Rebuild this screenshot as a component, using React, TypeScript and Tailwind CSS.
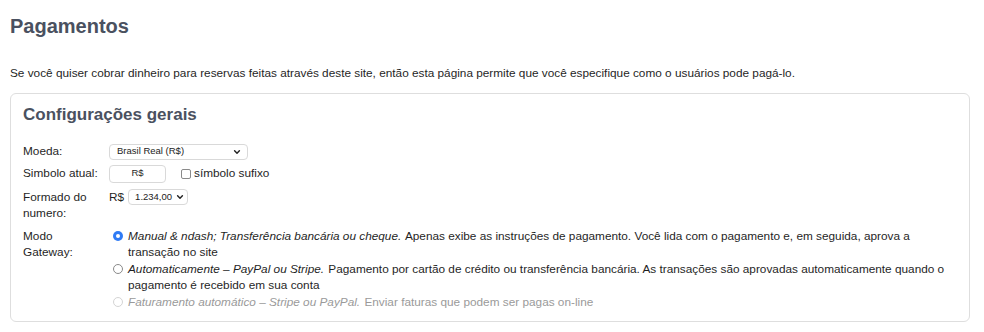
import { ReactNode } from 'react';

function Chevron() {
  return (
    <svg className="block w-[8px] h-[8px] shrink-0" viewBox="0 0 10 10" fill="none">
      <path d="M2 3.5L5 6.5L8 3.5" stroke="#222" strokeWidth="1.8" strokeLinecap="round" strokeLinejoin="round" />
    </svg>
  );
}

function FakeSelect({ value, className }: { value: string; className: string }) {
  return (
    <div
      className={`flex items-center justify-between bg-white border border-[#d9d9d9] rounded-[4px] text-[9.5px] text-[#222] ${className}`}
    >
      <span>{value}</span>
      <Chevron />
    </div>
  );
}

function Row({ label, children, className = '' }: { label: ReactNode; children: ReactNode; className?: string }) {
  return (
    <div className={`flex ${className}`}>
      <div className="w-[86px] shrink-0">{label}</div>
      <div className="flex-1">{children}</div>
    </div>
  );
}

function Radio({ state }: { state: 'on' | 'off' | 'disabled' }) {
  if (state === 'on') {
    return (
      <span className="w-[10px] h-[10px] rounded-full bg-[#2f7bf5] flex items-center justify-center">
        <span className="block w-[4px] h-[4px] rounded-full bg-white" />
      </span>
    );
  }
  return (
    <span
      className={`block w-[10px] h-[10px] rounded-full bg-white border ${state === 'off' ? 'border-[#8a8a8a]' : 'border-[#d4d4d4]'}`}
    />
  );
}

function Option({ state, title, children }: { state: 'on' | 'off' | 'disabled'; title: string; children: ReactNode }) {
  return (
    <div className={`flex ${state === 'disabled' ? 'text-[#9a9a9a]' : ''}`}>
      <div className="w-[19px] shrink-0 pl-[4px] pt-[3px]">
        <Radio state={state} />
      </div>
      <div className="flex-1">
        <em className="pr-[1px]">{title}</em> {children}
      </div>
    </div>
  );
}

export default function App() {
  return (
    <div className="min-h-screen bg-white px-[10px] pt-[14px] font-['Liberation_Sans',Arial,sans-serif] text-[11.8px] leading-[16.5px] text-[#1f1f1f]">
      <h1 className="text-[20px] leading-[24px] font-bold text-[#4a5160]">Pagamentos</h1>

      <p className="mt-[27px]">
        Se você quiser cobrar dinheiro para reservas feitas através deste site, então esta página permite que você especifique como o usuários pode pagá-lo.
      </p>

      <div className="mt-[11px] w-[960px] border border-[#dedede] rounded-[6px] px-[12px] pt-[10px] pb-[11px]">
        <h2 className="text-[17px] leading-[22px] font-bold text-[#4a5160]">Configurações gerais</h2>

        <Row label="Moeda:" className="mt-[16px] h-[20px] items-center">
          <FakeSelect value="Brasil Real (R$)" className="w-[139px] h-[16px] pl-[7px] pr-[6px]" />
        </Row>

        <Row label="Simbolo atual:" className="mt-[1px] h-[22px] items-center">
          <div className="flex items-center">
            <div className="w-[57px] h-[18px] border border-[#d9d9d9] rounded-[4px] flex items-center justify-center text-[9.5px]">
              R$
            </div>
            <span className="block shrink-0 ml-[15px] w-[10px] h-[10px] border border-[#8a8a8a] rounded-[2px] bg-white" />
            <span className="ml-[3px]">símbolo sufixo</span>
          </div>
        </Row>

        <Row
          label={
            <>
              Formado do
              <br />
              numero:
            </>
          }
          className="mt-[4px]"
        >
          <div className="flex items-center h-[17px]">
            <span>R$</span>
            <FakeSelect value="1.234,00" className="ml-[4px] w-[60px] h-[16px] pl-[6px] pr-[3px]" />
          </div>
        </Row>

        <Row
          label={
            <>
              Modo
              <br />
              Gateway:
            </>
          }
          className="mt-[6px]"
        >
          <Option state="on" title="Manual & ndash; Transferência bancária ou cheque.">
            Apenas exibe as instruções de pagamento. Você lida com o pagamento e, em seguida, aprova a transação no site
          </Option>
          <Option state="off" title="Automaticamente – PayPal ou Stripe.">
            Pagamento por cartão de crédito ou transferência bancária. As transações são aprovadas automaticamente quando o pagamento é recebido em sua conta
          </Option>
          <Option state="disabled" title="Faturamento automático – Stripe ou PayPal.">
            Enviar faturas que podem ser pagas on-line
          </Option>
        </Row>
      </div>
    </div>
  );
}
